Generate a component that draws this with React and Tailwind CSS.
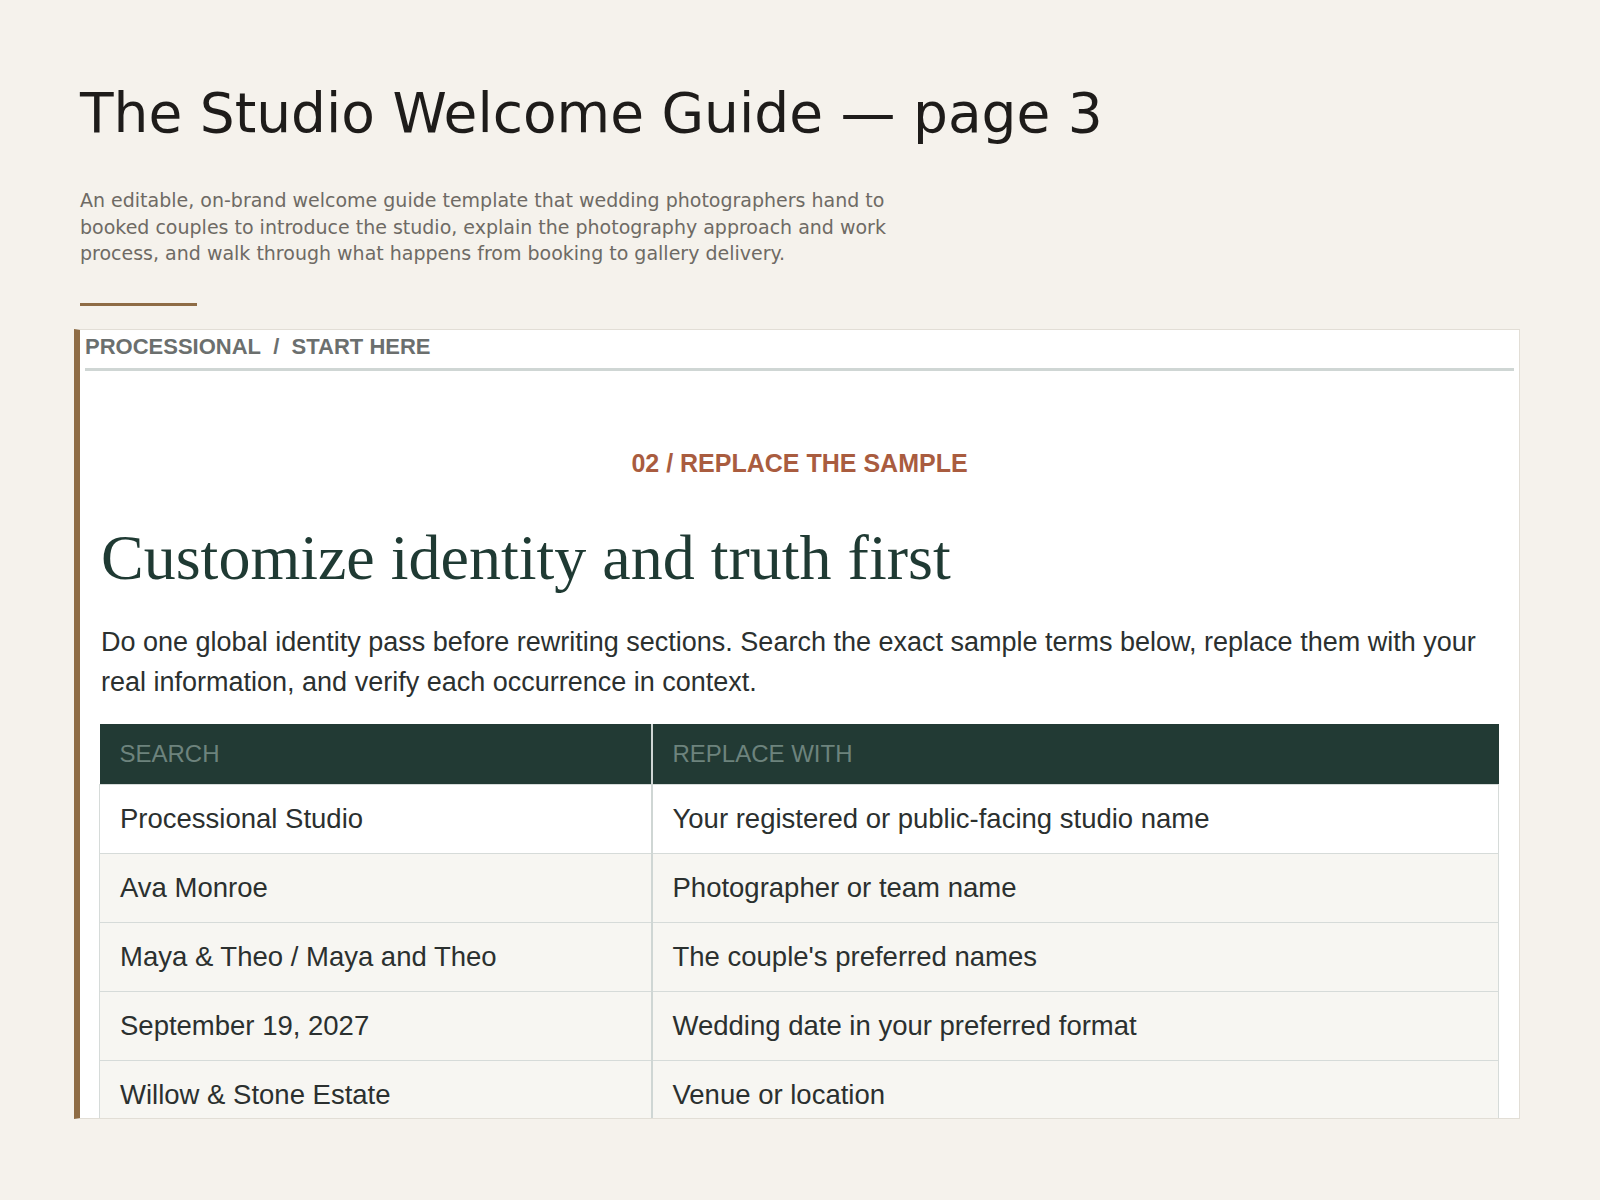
const rows = [
  ['Processional Studio', 'Your registered or public-facing studio name'],
  ['Ava Monroe', 'Photographer or team name'],
  ['Maya & Theo / Maya and Theo', "The couple's preferred names"],
  ['September 19, 2027', 'Wedding date in your preferred format'],
  ['Willow & Stone Estate', 'Venue or location'],
]

export default function App() {
  return (
    <div className="min-h-[1200px] bg-[#f5f2ec] px-[74px] pt-[80px] font-[Liberation_Sans]">
      <h1 className="pl-[6px] text-[55px] leading-[66px] text-[#1e1c1a] font-[DejaVu_Sans]">
        The Studio Welcome Guide — page 3
      </h1>
      <p className="mt-[41px] pl-[6px] w-[840px] text-[19px] leading-[26.5px] text-[#6e6a64] font-[DejaVu_Sans]">
        An editable, on-brand welcome guide template that wedding photographers hand to booked couples to introduce the studio, explain the photography approach and work process, and walk through what happens from booking to gallery delivery.
      </p>
      <div className="ml-[6px] mt-[36px] h-[3px] w-[117px] bg-[#8e6c45]" />
      <div className="mt-[23px] h-[790px] w-[1446px] overflow-hidden border border-[#e2ded6] border-l-[6px] border-l-[#8e6c45] bg-white">
        <div className="mx-[5px] border-b-[3px] border-[#cfd6d4] pb-[5px] pt-[0px] text-[22px] font-bold text-[#6b6f6e]">
          PROCESSIONAL&nbsp; /&nbsp; START HERE
        </div>
        <div className="px-[21px]">
          <div className="mt-[74px] text-center text-[25px] font-bold text-[#a95c3f]">02 / REPLACE THE SAMPLE</div>
          <h2 className="mt-[40px] text-[64px] leading-[72px] text-[#1f3a33] font-[Liberation_Serif]">
            Customize identity and truth first
          </h2>
          <p className="mt-[28px] text-[27px] leading-[40px] text-[#2b302f]">
            Do one global identity pass before rewriting sections. Search the exact sample terms below, replace them with your real information, and verify each occurrence in context.
          </p>
          <table className="mt-[22px] w-[1400px] border-collapse -ml-[2px] text-[27.5px]">
            <thead>
              <tr className="h-[60px] bg-[#223a34] text-left text-[24px] text-[#6d837d]">
                <th className="w-[552px] border-r-2 border-[#cfd6d4] pl-[20px] font-normal">SEARCH</th>
                <th className="pl-[20px] font-normal">REPLACE WITH</th>
              </tr>
            </thead>
            <tbody>
              {rows.map((r, i) => (
                <tr key={i} className={`h-[69px] border border-[#d6dbd9] text-[#2b302f] ${i === 0 ? 'bg-white' : 'bg-[#f7f6f2]'}`}>
                  <td className="border-r-2 border-[#cfd6d4] pl-[20px]">{r[0]}</td>
                  <td className="pl-[20px]">{r[1]}</td>
                </tr>
              ))}
            </tbody>
          </table>
        </div>
      </div>
    </div>
  )
}
